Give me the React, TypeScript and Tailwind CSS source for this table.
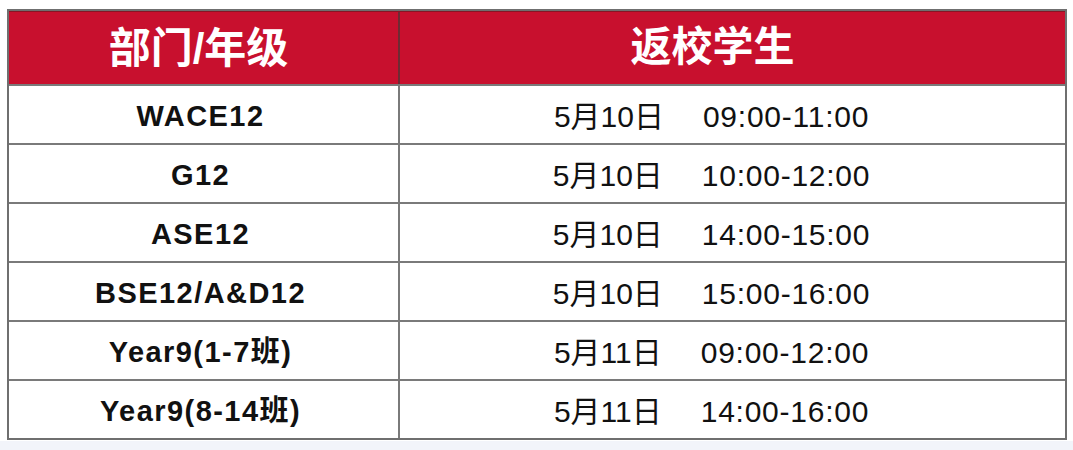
import React from 'react';

const rows = [
  { dept: 'WACE12', date: '5月10日', time: '09:00-11:00' },
  { dept: 'G12', date: '5月10日', time: '10:00-12:00' },
  { dept: 'ASE12', date: '5月10日', time: '14:00-15:00' },
  { dept: 'BSE12/A&D12', date: '5月10日', time: '15:00-16:00' },
  { dept: 'Year9(1-7班)', date: '5月11日', time: '09:00-12:00' },
  { dept: 'Year9(8-14班)', date: '5月11日', time: '14:00-16:00' },
];

const font = { fontFamily: '"Liberation Sans", "Noto Sans CJK SC", sans-serif' };

export default function App() {
  return (
    <div className="w-[1073px] h-[450px] flex flex-col bg-white" style={font}>
      <div className="pt-[9px] pl-[7px] pr-[6px]">
        <div className="border-2 border-[#6f6f6f]">
          {/* header */}
          <div className="flex h-[73px] bg-[#c8102e] border-t border-[#8a1424]">
            <div className="w-[389px] flex items-center justify-center pr-[10px] text-white text-[42px] font-bold">
              部门/年级
            </div>
            <div className="flex-1 border-l-2 border-[#6f2a33] flex items-center justify-center pr-[40px] text-white text-[41px] font-bold">
              返校学生
            </div>
          </div>
          {rows.map((r) => (
            <div key={r.dept} className="flex h-[59px] border-t-2 border-[#7a7a7a]">
              <div className="w-[389px] flex items-center justify-center pt-[4px] pr-[6px] text-[29px] font-bold text-[#111] tracking-[0.05em]">
                {r.dept}
              </div>
              <div className="flex-1 border-l-2 border-[#7a7a7a] flex items-center justify-center pr-[42px] pt-[4px] text-[30px] text-[#111] gap-[39px]">
                <span>{r.date}</span>
                <span className="tracking-[0.025em]">{r.time}</span>
              </div>
            </div>
          ))}
        </div>
      </div>
      <div className="flex-1 mt-[1px] bg-[#f2f4fa]" />
    </div>
  );
}
